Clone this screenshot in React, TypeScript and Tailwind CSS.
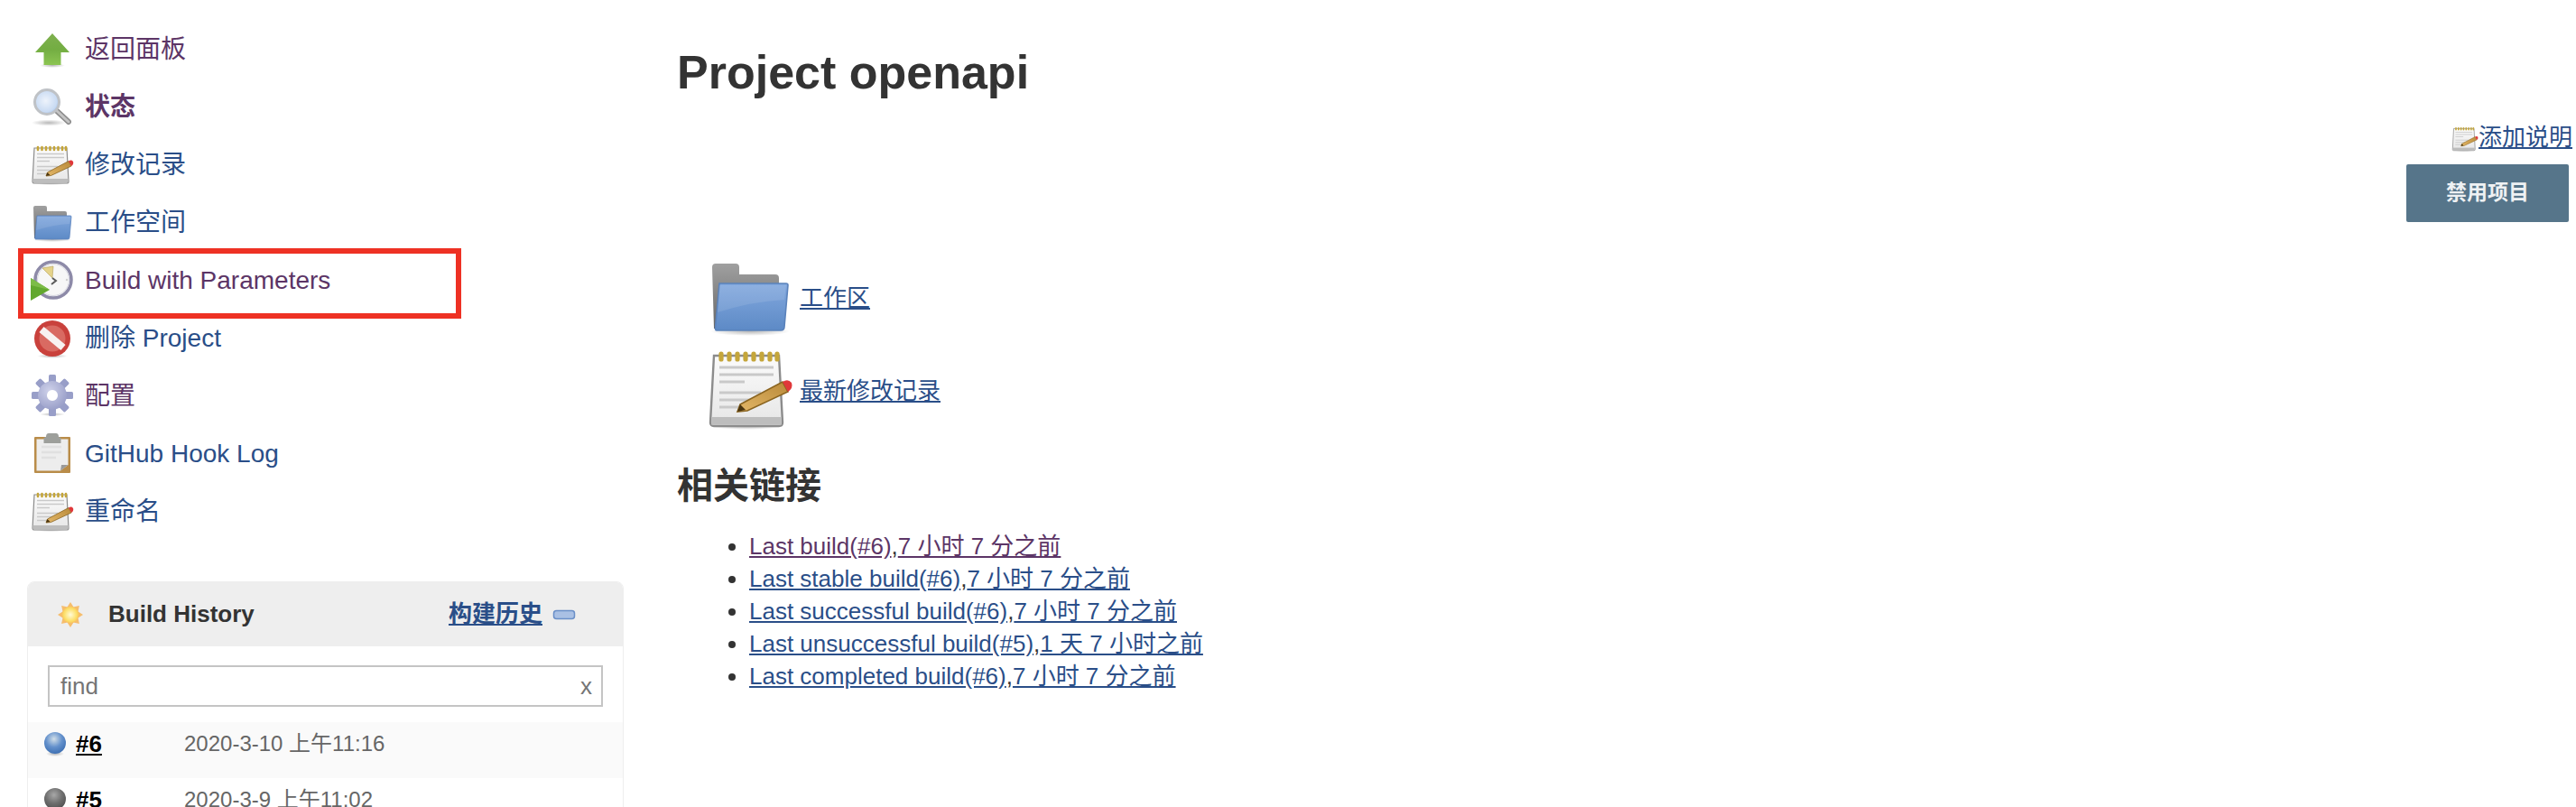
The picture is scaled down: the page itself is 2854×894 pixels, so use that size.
import React from "react";

const FONT = '"Liberation Sans","Noto Sans CJK SC",sans-serif';

function Defs() {
  return (
    <svg width="0" height="0" className="absolute">
      <defs>
        <linearGradient id="gGreen" x1="0" y1="0" x2="0" y2="1"><stop offset="0" stopColor="#7fb04f" /><stop offset="0.5" stopColor="#73ad42" /><stop offset="1" stopColor="#8cc552" /></linearGradient>
        <radialGradient id="gLens" cx="0.45" cy="0.45" r="0.6"><stop offset="0" stopColor="#eef3fb" /><stop offset="0.75" stopColor="#c9dbf3" /><stop offset="1" stopColor="#9fbde6" /></radialGradient>
        <linearGradient id="gPaper" x1="0" y1="0" x2="0" y2="1"><stop offset="0" stopColor="#fbfbfb" /><stop offset="1" stopColor="#e6e6e6" /></linearGradient>
        <linearGradient id="gFolder" x1="0" y1="0" x2="0" y2="1"><stop offset="0" stopColor="#82a8de" /><stop offset="1" stopColor="#5d8ac6" /></linearGradient>
        <linearGradient id="gFolderBack" x1="0" y1="0" x2="0" y2="1"><stop offset="0" stopColor="#a0a0a0" /><stop offset="1" stopColor="#666666" /></linearGradient>
        <linearGradient id="gPencil" x1="0" y1="1" x2="1" y2="0"><stop offset="0" stopColor="#e3b768" /><stop offset="1" stopColor="#b98a3a" /></linearGradient>
        <radialGradient id="gGear" cx="0.4" cy="0.35" r="0.8"><stop offset="0" stopColor="#cfd2ea" /><stop offset="1" stopColor="#8f95c2" /></radialGradient>
        <radialGradient id="gSun" cx="0.5" cy="0.5" r="0.5"><stop offset="0" stopColor="#fffbd9" /><stop offset="0.7" stopColor="#fde273" /><stop offset="1" stopColor="#f9cf57" /></radialGradient>
        <radialGradient id="gBlue" cx="0.45" cy="0.32" r="0.75"><stop offset="0" stopColor="#d2dfe8" /><stop offset="0.5" stopColor="#6491cc" /><stop offset="1" stopColor="#3568ad" /></radialGradient>
        <radialGradient id="gGrey" cx="0.45" cy="0.32" r="0.75"><stop offset="0" stopColor="#a8a8a8" /><stop offset="0.5" stopColor="#707070" /><stop offset="1" stopColor="#4a4a4a" /></radialGradient>
        <radialGradient id="gShadow" cx="0.5" cy="0.5" r="0.5"><stop offset="0" stopColor="#000" stopOpacity="0.28" /><stop offset="1" stopColor="#000" stopOpacity="0" /></radialGradient>
      </defs>
    </svg>
  );
}

function ArrowUp() {
  return (
    <svg viewBox="0 0 48 48" className="w-12 h-12 shrink-0 blur-[0.5px]">
      <ellipse cx="24" cy="43.5" rx="14" ry="2.5" fill="url(#gShadow)" />
      <path d="M24 8 L43 29 L33.5 29 L33.5 43 L14.5 43 L14.5 29 L5 29 Z" fill="url(#gGreen)" />
    </svg>
  );
}
function Magnifier() {
  return (
    <svg viewBox="0 0 48 48" className="w-12 h-12 shrink-0 blur-[0.5px]">
      <ellipse cx="20" cy="43" rx="19" ry="3.5" fill="url(#gShadow)" />
      <path d="M28 29 L42 42" stroke="#8d8d8d" strokeWidth="6" strokeLinecap="round" />
      <path d="M28 29 L42 42" stroke="#c4c4c4" strokeWidth="3" strokeLinecap="round" />
      <circle cx="18" cy="20" r="13.5" fill="url(#gLens)" stroke="#bfc2c6" strokeWidth="3" />
    </svg>
  );
}
function Notepad({ className = "w-12 h-12" }: { className?: string }) {
  return (
    <svg viewBox="0 0 48 48" className={`${className} shrink-0 blur-[0.5px]`}>
      <ellipse cx="22" cy="46" rx="20" ry="2" fill="url(#gShadow)" />
      <path d="M4 7 H40 L42 44 Q42 46 40 46 H4 Q2 46 2 44 Z" fill="url(#gPaper)" stroke="#8c8c8c" strokeWidth="1.2" />
      <rect x="2.6" y="41" width="38.8" height="4.4" fill="#bdbdbd" />
      <g stroke="#c5a63a" strokeWidth="2.6" strokeLinecap="round">
        <path d="M8 6V9M12.5 6V9M17 6V9M21.5 6V9M26 6V9M30.5 6V9M35 6V9M39 6V9" />
      </g>
      <g stroke="#c9c9c9" strokeWidth="1.4">
        <path d="M7 13.5H37M7 17.5H37M7 21.5H21M7 27.5H30M7 31.5H24M7 35.5H19" />
      </g>
      <path d="M18.5 34 L42 21.5 L45 27 L22.5 37.5 L17 38 Z" fill="url(#gPencil)" stroke="#8a6420" strokeWidth="0.8" />
      <path d="M17 38 L18.5 34 L21.5 37 Z" fill="#4a3510" />
      <path d="M42 21.5 Q45 19.5 47 22 Q48 25 45 27 Z" fill="#e0383a" />
    </svg>
  );
}
function Folder({ className = "w-12 h-12" }: { className?: string }) {
  return (
    <svg viewBox="0 0 48 48" className={`${className} shrink-0 blur-[0.5px]`}>
      <ellipse cx="24" cy="44.5" rx="22" ry="2.5" fill="url(#gShadow)" />
      <path d="M3 9 Q3 7 5 7 H16 Q18 7 18 9 V13 H38 Q40 13 40 15 V43 H4 Z" fill="url(#gFolderBack)" />
      <path d="M7 18 H44 Q45 18 45 19 L43 42 Q43 44 41 44 H5.5 Q4.5 44 4.8 42 Z" fill="url(#gFolder)" stroke="#5a82bb" strokeWidth="0.8" />
      <path d="M7 19 H44 L43 27 Q25 28 6 34 Z" fill="#fff" opacity="0.1" />
    </svg>
  );
}
function Clock() {
  return (
    <svg viewBox="0 0 48 48" className="w-12 h-12 shrink-0 blur-[0.5px]">
      <circle cx="25" cy="25" r="20" fill="#f7f7f7" stroke="#8d8aa8" strokeWidth="3.5" />
      <circle cx="25" cy="25" r="17.5" fill="none" stroke="#d6d6e0" strokeWidth="1" />
      <path d="M13 12 L25 10 L24 23 Z" fill="#e5d38a" stroke="#b39f58" strokeWidth="0.6" />
      <path d="M24 23 L28 26 L23 30" fill="none" stroke="#5a5a5a" strokeWidth="2" />
      <circle cx="40" cy="25" r="1.2" fill="#cfcfcf" />
      <path d="M0 23 L21 36 L0 48 Z" fill="#62a82e" />
      <path d="M0 23 L21 36 L0 31 Z" fill="#7dbc48" />
    </svg>
  );
}
function NoEntry() {
  return (
    <svg viewBox="0 0 48 48" className="w-12 h-12 shrink-0 blur-[0.5px]">
      <ellipse cx="24" cy="45.5" rx="17" ry="2.5" fill="url(#gShadow)" />
      <circle cx="24" cy="26" r="20" fill="#c9413c" />
      <circle cx="24" cy="26" r="14.5" fill="#d96a62" />
      <path d="M12 16 L36 36" stroke="#f8f2f1" strokeWidth="8" />
    </svg>
  );
}
function Gear() {
  const teeth = [0, 45, 90, 135, 180, 225, 270, 315];
  return (
    <svg viewBox="0 0 48 48" className="w-12 h-12 shrink-0 blur-[0.5px]">
      <ellipse cx="24" cy="46" rx="14" ry="2" fill="url(#gShadow)" />
      <g fill="#989ec8">
        {teeth.map((a) => (
          <rect key={a} x="20" y="2" width="8" height="12" rx="1.5" transform={`rotate(${a} 24 25)`} />
        ))}
      </g>
      <path fillRule="evenodd" d="M24 9 A16 16 0 1 1 23.99 9 Z M24 19 A6 6 0 1 0 24.01 19 Z" fill="url(#gGear)" />
    </svg>
  );
}
function Clipboard() {
  return (
    <svg viewBox="0 0 48 48" className="w-12 h-12 shrink-0 blur-[0.5px]">
      <rect x="4" y="7" width="40" height="40" rx="1" fill="#b98c49" />
      <path d="M6.5 9.5 H41.5 V38 L33 44.5 H6.5 Z" fill="#ededed" />
      <path d="M33 44.5 L34 38 H41.5 Z" fill="#9a9a9a" />
      <path d="M12 18 H34 M12 24 H34 M12 30 H28" stroke="#e0e0e0" strokeWidth="2.5" />
      <path d="M17 7 Q17 3 20 3 H28 Q31 3 31 7 L33.5 8 V14 H14.5 V8 Z" fill="#9d9f9b" />
    </svg>
  );
}
function Sun() {
  const rays = [0, 45, 90, 135, 180, 225, 270, 315];
  return (
    <svg viewBox="0 0 32 32" className="w-8 h-8 shrink-0 blur-[0.5px]">
      <g fill="#f6bd6c">
        {rays.map((a) => (
          <path key={a} d="M16 2 L20.5 9 H11.5 Z" transform={`rotate(${a} 16 16)`} />
        ))}
      </g>
      <circle cx="16" cy="16" r="9" fill="url(#gSun)" />
    </svg>
  );
}
function Ball({ grey = false }: { grey?: boolean }) {
  return (
    <svg viewBox="0 0 26 28" className="w-[26px] h-7 shrink-0 blur-[0.6px]">
      <ellipse cx="13" cy="25" rx="10" ry="3" fill="url(#gShadow)" />
      <circle cx="13" cy="13" r="12" fill={grey ? "url(#gGrey)" : "url(#gBlue)"} />
    </svg>
  );
}
function Minus() {
  return (
    <svg viewBox="0 0 26 12" className="w-[26px] h-3 shrink-0 blur-[0.3px]">
      <rect x="1.5" y="1.5" width="23" height="9" rx="3" fill="#a9c0e4" stroke="#6a8fc8" strokeWidth="1.5" />
    </svg>
  );
}

const BLUE = "text-[#2a4e88]";
const PURPLE = "text-[#5c3566]";

const tasks: { icon: React.ReactNode; label: string; color: string; bold?: boolean; boxed?: boolean }[] = [
  { icon: <ArrowUp />, label: "返回面板", color: PURPLE },
  { icon: <Magnifier />, label: "状态", color: PURPLE, bold: true },
  { icon: <Notepad />, label: "修改记录", color: BLUE },
  { icon: <Folder />, label: "工作空间", color: BLUE },
  { icon: <Clock />, label: "Build with Parameters", color: PURPLE, boxed: true },
  { icon: <NoEntry />, label: "删除 Project", color: BLUE },
  { icon: <Gear />, label: "配置", color: PURPLE },
  { icon: <Clipboard />, label: "GitHub Hook Log", color: BLUE },
  { icon: <Notepad />, label: "重命名", color: BLUE },
];

const links = [
  { a: "Last build(#6)", b: "7 小时 7 分之前", color: PURPLE },
  { a: "Last stable build(#6)", b: "7 小时 7 分之前", color: BLUE },
  { a: "Last successful build(#6)", b: "7 小时 7 分之前", color: BLUE },
  { a: "Last unsuccessful build(#5)", b: "1 天 7 小时之前", color: BLUE },
  { a: "Last completed build(#6)", b: "7 小时 7 分之前", color: BLUE },
];

export default function App() {
  return (
    <div className="flex h-[894px] overflow-hidden bg-white text-[#333333] text-[26px]" style={{ fontFamily: FONT }}>
      <Defs />
      <aside className="w-[750px] shrink-0 pt-[21px]">
        {tasks.map((t) => (
          <div key={t.label} className="relative flex items-center h-16 pl-[34px] gap-[12px] text-[28px]">
            {t.icon}
            <span className={`mt-[3px] ${t.color} ${t.bold ? "font-bold" : ""}`}>{t.label}</span>
            {t.boxed && (
              <span className="absolute left-[20px] top-[-2px] w-[491px] h-[78px] border-[6px] border-[#ee3124]" />
            )}
          </div>
        ))}
        <section className="ml-[30px] mt-[47px] w-[661px] border border-[#eeeeee] rounded-t-[8px] overflow-hidden">
          <div className="flex items-center h-[71px] bg-[#eeeeee] pl-[31px] pr-[52px]">
            <Sun />
            <span className="ml-[26px] font-bold">Build History</span>
            <a className={`ml-auto font-bold underline ${BLUE}`}>构建历史</a>
            <span className="ml-[11px]"><Minus /></span>
          </div>
          <div className="px-[22px] pt-[21px] pb-[17px]">
            <div className="flex items-center justify-between h-[46px] border-2 border-[#c4c4c4] pl-[12px] pr-[10px] text-[#757575]">
              <span>find</span>
              <span>x</span>
            </div>
          </div>
          <div className="flex items-center h-[62px] bg-[#fafafa] pl-[17px] pb-[14px]">
            <Ball />
            <a className="ml-[10px] w-[120px] font-bold text-black underline">#6</a>
            <span className="text-[#666666] text-[24px]">2020-3-10 上午11:16</span>
          </div>
          <div className="flex items-center h-[62px] pl-[17px] pb-[14px]">
            <Ball grey />
            <a className="ml-[10px] w-[120px] font-bold text-black">#5</a>
            <span className="text-[#666666] text-[24px]">2020-3-9 上午11:02</span>
          </div>
        </section>
      </aside>
      <main className="flex-1 min-w-0 flex flex-col pr-[4px]">
        <h1 className="mt-[50px] h-[60px] text-[52px] leading-[60px] font-bold">Project openapi</h1>
        <div className="mt-[28px] flex flex-col items-end">
          <div className="flex items-center h-[30px]">
            <Notepad className="w-[30px] h-[30px]" />
            <a className={`underline mt-[-2px] ${BLUE}`}>添加说明</a>
          </div>
          <button className="mt-[14px] mr-[4px] w-[180px] h-[64px] rounded-[2px] bg-[#56758a] text-[#eef1f3] text-[23px] font-bold pb-[2px]">禁用项目</button>
        </div>
        <div className="mt-[32px] flex items-center h-24 pl-[33px] gap-[7px]">
          <Folder className="w-24 h-24" />
          <a className={`underline mt-[8px] ${BLUE}`}>工作区</a>
        </div>
        <div className="mt-[6px] flex items-center h-24 pl-[33px] gap-[7px]">
          <Notepad className="w-24 h-24" />
          <a className={`underline mt-[10px] ${BLUE}`}>最新修改记录</a>
        </div>
        <h2 className="mt-[38px] text-[40px] leading-[48px] font-bold">相关链接</h2>
        <ul className="mt-[25px] pl-[80px] list-disc leading-[36px]">
          {links.map((l) => (
            <li key={l.a}>
              <a className={`underline ${l.color}`}>{l.a}</a>
              <span>,</span>
              <a className={`underline ${l.color}`}>{l.b}</a>
            </li>
          ))}
        </ul>
      </main>
    </div>
  );
}
